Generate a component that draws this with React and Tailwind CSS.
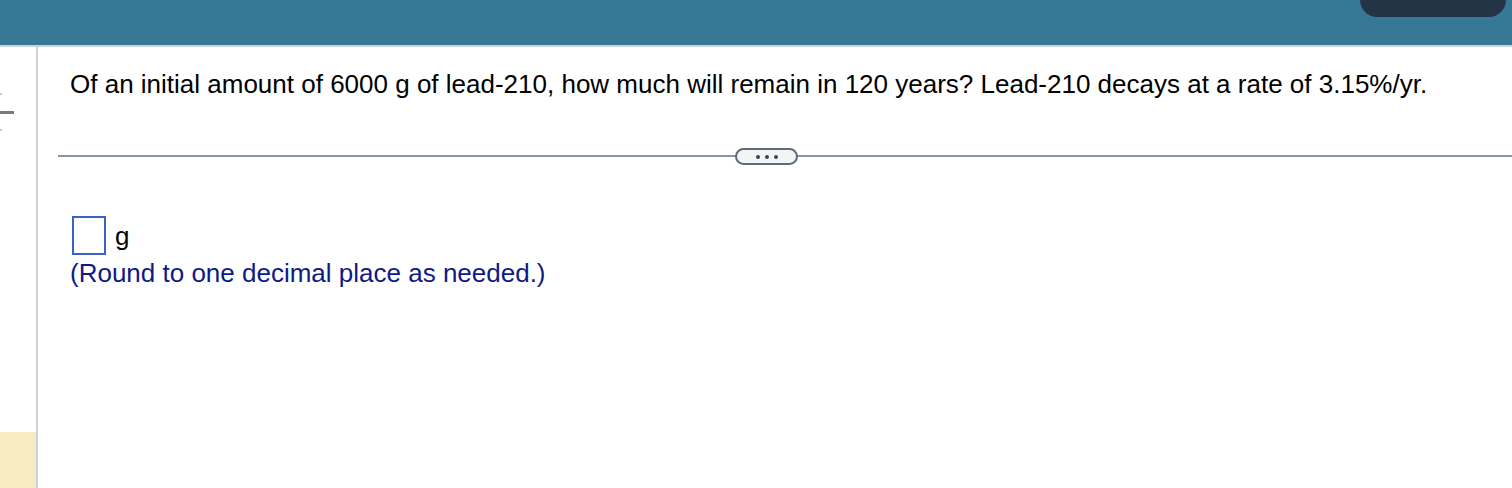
export default function App() {
  return (
    <div className="flex h-[488px] w-[1512px] flex-col overflow-hidden bg-white font-['Liberation_Sans',Arial,sans-serif]">
      {/* top bar */}
      <div className="relative h-[45px] shrink-0 bg-[#367896]">
        <div className="absolute right-[6px] top-0 h-[17px] w-[146px] rounded-b-[18px] bg-[#243447]" />
      </div>
      <div className="h-[2px] shrink-0 bg-[#cdd1dc]" />

      <div className="flex min-h-0 flex-1">
        {/* left rail */}
        <div className="flex w-[36px] shrink-0 flex-col">
          <div className="relative h-[385px]">
            <div className="absolute left-0 top-[46px] h-[2px] w-[2px] bg-[#c4c4c4]" />
            <div className="absolute left-0 top-[64px] h-[3px] w-[14px] bg-[#7a7a7a]" />
            <div className="absolute left-0 top-[82px] h-[2px] w-[2px] bg-[#c4c4c4]" />
          </div>
          <div className="flex-1 bg-[#f8ecc4]" />
        </div>
        <div className="w-[2px] shrink-0 bg-[#cdd1dc]" />

        {/* content */}
        <div className="flex flex-1 flex-col">
          <p className="ml-[32px] mt-[22px] whitespace-nowrap text-[26px] leading-[30px] text-black">
            Of an initial amount of 6000 g of lead-210, how much will remain in 120 years? Lead-210 decays at a rate of 3.15%/yr.
          </p>

          <div className="relative ml-[20px] mt-[56px] flex items-center">
            <div className="h-[2px] flex-1 bg-[#8a94a2]" />
            <div className="absolute left-[677px] top-[-7px] flex h-[17px] w-[63px] items-center justify-center gap-[5px] rounded-full border-2 border-[#5f6b7a] bg-[#f3f4f6]">
              <span className="h-[4px] w-[4px] rounded-full bg-[#3b4450]" />
              <span className="h-[4px] w-[4px] rounded-full bg-[#3b4450]" />
              <span className="h-[4px] w-[4px] rounded-full bg-[#3b4450]" />
            </div>
          </div>

          <div className="ml-[34px] mt-[59px] flex items-center gap-[9px]">
            <div className="h-[39px] w-[34px] border-2 border-[#3b63c6] bg-white" />
            <span className="text-[26px] leading-[24px] text-black">g</span>
          </div>
          <p className="ml-[32px] mt-[3px] text-[26px] leading-[30px] text-[#0f1a85]">
            (Round to one decimal place as needed.)
          </p>
        </div>
      </div>
    </div>
  );
}
